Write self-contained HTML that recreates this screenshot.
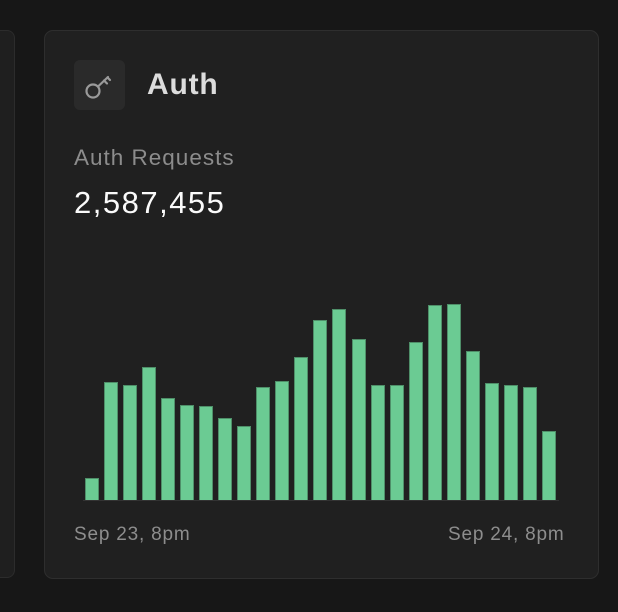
<!DOCTYPE html>
<html><head><style>
*{margin:0;padding:0;box-sizing:border-box}
body{width:618px;height:612px;background:#171717;position:relative;overflow:hidden;font-family:"Liberation Sans",sans-serif}
.lc{position:absolute;left:-20px;top:30px;width:35px;height:548px;background:#1f1f1f;border:1px solid #2c2c2c;border-radius:8px}
.card{position:absolute;left:44px;top:30px;width:555px;height:549px;background:#202020;border:1px solid #2e2e2e;border-radius:9px}
.ib{position:absolute;left:74px;top:60px;width:51px;height:50px;background:#2a2a2a;border-radius:6px}
.t{position:absolute;color:#dcdcdc;white-space:nowrap}
.bar{position:absolute;width:14px;background:#6bcb93;border:1px solid #4f8f69;border-bottom:none}
</style></head><body>
<div class="lc"></div>
<div class="card"></div>
<div class="ib"><svg width="51" height="50" viewBox="0 0 51 50"><g fill="none" stroke="#9a9a9a" stroke-width="2.2" stroke-linecap="round" stroke-linejoin="round"><circle cx="19" cy="31" r="6.5"/><path d="M24 26.5 L34 17"/><path d="M30 20.5 l3 3 M33.5 17.5 l2.5 2.5"/></g></svg></div>
<div class="t" style="left:147px;top:68px;font-size:30px;font-weight:bold;letter-spacing:0.8px">Auth</div>
<div class="t" style="left:74px;top:145px;font-size:22.5px;color:#8c8c8c;letter-spacing:1px">Auth Requests</div>
<div class="t" style="left:74px;top:185px;font-size:31px;color:#fafafa;letter-spacing:1.5px">2,587,455</div>
<div class="t" style="left:74px;top:524px;font-size:19px;color:#8d8d8d;letter-spacing:0.8px">Sep 23, 8pm</div>
<div class="t" style="left:448px;top:524px;font-size:19px;color:#8d8d8d;letter-spacing:0.8px">Sep 24, 8pm</div>
<div style="position:absolute;left:83px;top:500px;width:476px;height:1px;background:#333"></div>
<div id="bars"></div>
<script>
var tops=[478,382,385,367,398,405,406,418,426,387,381,357,320,309,339,385,385,342,305,304,351,383,385,387,431];
var xs=[85,104,123,142,161,180,199,218,237,256,275,294,313,332,352,371,390,409,428,447,466,485,504,523,542];
var h='';for(var i=0;i<25;i++){h+='<div class="bar" style="left:'+xs[i]+'px;top:'+tops[i]+'px;height:'+(500-tops[i])+'px"></div>';}
document.getElementById('bars').innerHTML=h;
</script>
</body></html>
